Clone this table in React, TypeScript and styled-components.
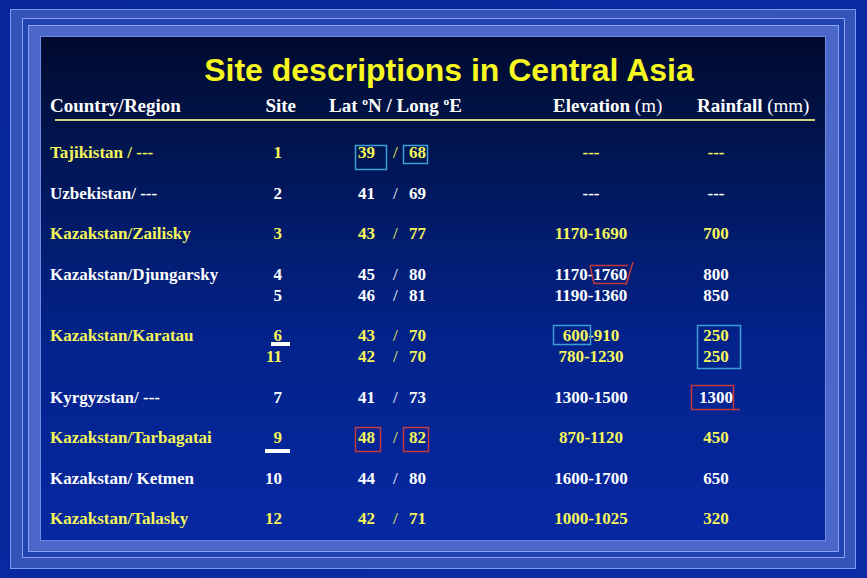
import React from 'react';
import styled, { createGlobalStyle } from 'styled-components';

const Global = createGlobalStyle`
  html, body { margin: 0; padding: 0; background: #0a2a9e; }
  * { box-sizing: border-box; }
`;

const Stage = styled.div`
  position: relative;
  width: 867px;
  height: 578px;
  padding: 9px 11px 9px 10px;
  display: flex;
  background: linear-gradient(135deg, #08269a 0%, #0a2ca6 100%);
  overflow: hidden;
`;

const Frame = styled.div<{ $bg: string; $line: string; $pad: string }>`
  flex: 1;
  display: flex;
  border: 1px solid ${(p) => p.$line};
  background: ${(p) => p.$bg};
  padding: ${(p) => p.$pad};
`;

const Panel = styled.div`
  flex: 1;
  display: flex;
  flex-direction: column;
  border: 1px solid #6f8ae2;
  background: linear-gradient(
    180deg,
    #000a30 0%,
    #00103f 12%,
    #011a66 35%,
    #03228a 60%,
    #0628a2 100%
  );
  padding: 15px 0 0 9px;
`;

const Title = styled.h1`
  margin: 0;
  padding-left: 23px;
  text-align: center;
  font-family: 'Liberation Sans', Arial, sans-serif;
  font-weight: 700;
  font-size: 32px;
  line-height: 36px;
  color: #f8f820;
  letter-spacing: 0;
`;

const COLS = '200px 50px 230px 122px 128px';

const HeadRow = styled.div`
  display: grid;
  grid-template-columns: ${COLS};
  margin-top: 7px;
  font-family: 'Liberation Serif', 'Times New Roman', serif;
  font-size: 19px;
  line-height: 22px;
  height: 22px;
  color: #ffffff;
  white-space: nowrap;
`;

const HeadCell = styled.div<{ $indent?: number; $right?: number }>`
  font-weight: 700;
  padding-left: ${(p) => p.$indent ?? 0}px;
  text-align: ${(p) => (p.$right !== undefined ? 'right' : 'left')};
  padding-right: ${(p) => p.$right ?? 0}px;
`;

const Light = styled.span`
  font-weight: 400;
`;

const Deg = styled.span`
  display: inline-block;
  font-size: 0.6em;
  line-height: 0;
  transform: translateY(-0.6em);
  font-weight: 700;
`;

const Rule = styled.div`
  margin: 2px 0 0 5px;
  width: 760px;
  height: 2px;
  background: #cdd57a;
`;

const Body = styled.div`
  margin-top: 21px;
  display: flex;
  flex-direction: column;
  gap: 19.5px;
`;

const Row = styled.div<{ $yellow: boolean }>`
  display: grid;
  grid-template-columns: ${COLS};
  font-family: 'Liberation Serif', 'Times New Roman', serif;
  font-weight: 700;
  font-size: 17px;
  line-height: 21px;
  color: ${(p) => (p.$yellow ? '#f6f65c' : '#ffffff')};
  white-space: nowrap;
`;

const Cell = styled.div<{ $align?: 'left' | 'right' | 'center'; $pr?: number }>`
  text-align: ${(p) => p.$align ?? 'left'};
  padding-right: ${(p) => p.$pr ?? 0}px;
`;

const CoordLine = styled.div`
  display: flex;
`;

const Lat = styled.span`
  width: 75px;
  text-align: right;
`;

const Slash = styled.span`
  width: 34px;
  padding-left: 18px;
  font-weight: 400;
`;

const Overlay = styled.svg`
  position: absolute;
  left: 0;
  top: 0;
  pointer-events: none;
`;

type RowData = {
  country: string;
  sites: string[];
  coords: [string, string][];
  elev: string[];
  rain: string[];
};

const rows: RowData[] = [
  { country: 'Tajikistan / ---', sites: ['1'], coords: [['39', '68']], elev: ['---'], rain: ['---'] },
  { country: 'Uzbekistan/ ---', sites: ['2'], coords: [['41', '69']], elev: ['---'], rain: ['---'] },
  { country: 'Kazakstan/Zailisky', sites: ['3'], coords: [['43', '77']], elev: ['1170-1690'], rain: ['700'] },
  {
    country: 'Kazakstan/Djungarsky',
    sites: ['4', '5'],
    coords: [
      ['45', '80'],
      ['46', '81'],
    ],
    elev: ['1170-1760', '1190-1360'],
    rain: ['800', '850'],
  },
  {
    country: 'Kazakstan/Karatau',
    sites: ['6', '11'],
    coords: [
      ['43', '70'],
      ['42', '70'],
    ],
    elev: ['600-910', '780-1230'],
    rain: ['250', '250'],
  },
  { country: 'Kyrgyzstan/ ---', sites: ['7'], coords: [['41', '73']], elev: ['1300-1500'], rain: ['1300'] },
  { country: 'Kazakstan/Tarbagatai', sites: ['9'], coords: [['48', '82']], elev: ['870-1120'], rain: ['450'] },
  { country: 'Kazakstan/ Ketmen', sites: ['10'], coords: [['44', '80']], elev: ['1600-1700'], rain: ['650'] },
  { country: 'Kazakstan/Talasky', sites: ['12'], coords: [['42', '71']], elev: ['1000-1025'], rain: ['320'] },
];

const Lines = ({ items }: { items: string[] }) => (
  <>
    {items.map((t, i) => (
      <div key={i}>{t}</div>
    ))}
  </>
);

const CYAN = '#3c9fd6';
const RED = '#c23a3a';

const Marks = () => (
  <Overlay width={867} height={578} viewBox="0 0 867 578">
    <g fill="none" strokeWidth={1.5}>
      <rect x={355.5} y={145.5} width={31} height={24} stroke={CYAN} />
      <rect x={403.5} y={145.5} width={24} height={18} stroke={CYAN} />
      <rect x={553.5} y={325.5} width={37} height={19} stroke={CYAN} />
      <rect x={697.5} y={325.5} width={43} height={43} stroke={CYAN} />
      <rect x={355.5} y={427.5} width={25} height={24} stroke={RED} />
      <rect x={403.5} y={427.5} width={25} height={24} stroke={RED} />
      <rect x={691.5} y={385.5} width={42} height={24} stroke={RED} />
      <line x1={733} y1={409.5} x2={740} y2={409.5} stroke={RED} />
      <polyline points="590,265.5 628,265.5" stroke={RED} />
      <polyline points="590,265.5 594,283.5 626,283.5" stroke={RED} />
      <line x1={633} y1={262} x2={626} y2={285} stroke={RED} />
    </g>
    <rect x={271} y={342} width={19} height={4} fill="#ffffff" />
    <rect x={265} y={449} width={25} height={4} fill="#ffffff" />
  </Overlay>
);

export default function App() {
  return (
    <>
      <Global />
      <Stage>
        <Frame $bg="#3653ba" $line="#7d96ee" $pad="8px 10px 10px 11px">
          <Frame $bg="#2243b2" $line="#8aa2f2" $pad="6px 5px 5px 5px">
            <Frame $bg="#4a67c9" $line="#8aa2f2" $pad="10px 12px 10px 11px">
              <Panel>
                <Title>Site descriptions in Central Asia</Title>
                <HeadRow>
                  <HeadCell>Country/Region</HeadCell>
                  <HeadCell $right={4}>Site</HeadCell>
                  <HeadCell $indent={29}>
                    Lat <Deg>o</Deg>N / Long <Deg>o</Deg>E
                  </HeadCell>
                  <HeadCell $indent={23}>
                    Elevation <Light>(m)</Light>
                  </HeadCell>
                  <HeadCell $indent={45}>
                    Rainfall <Light>(mm)</Light>
                  </HeadCell>
                </HeadRow>
                <Rule />
                <Body>
                  {rows.map((r, i) => (
                    <Row key={i} $yellow={i % 2 === 0}>
                      <Cell>{r.country}</Cell>
                      <Cell $align="right" $pr={18}>
                        <Lines items={r.sites} />
                      </Cell>
                      <Cell>
                        {r.coords.map(([a, b], j) => (
                          <CoordLine key={j}>
                            <Lat>{a}</Lat>
                            <Slash>/</Slash>
                            <span>{b}</span>
                          </CoordLine>
                        ))}
                      </Cell>
                      <Cell $align="center">
                        <Lines items={r.elev} />
                      </Cell>
                      <Cell $align="center">
                        <Lines items={r.rain} />
                      </Cell>
                    </Row>
                  ))}
                </Body>
              </Panel>
            </Frame>
          </Frame>
        </Frame>
        <Marks />
      </Stage>
    </>
  );
}
